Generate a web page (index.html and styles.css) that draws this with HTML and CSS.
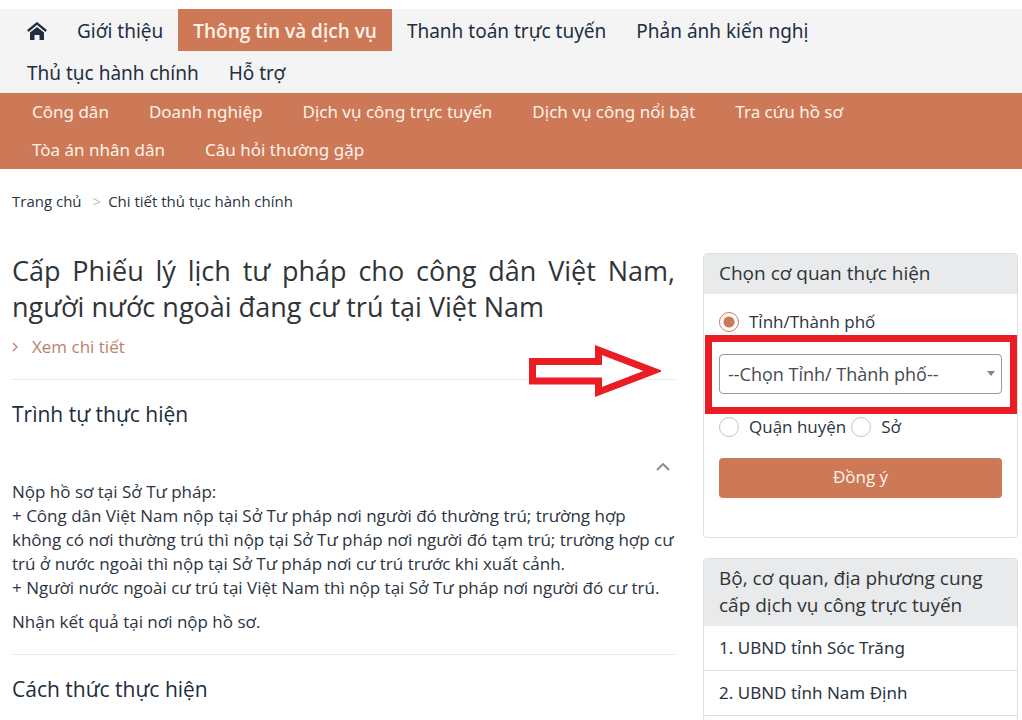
FILE: index.html
```
<!DOCTYPE html>
<html lang="vi">
<head>
<meta charset="utf-8">
<meta name="viewport" content="width=device-width, initial-scale=1">
<title>Chi tiết thủ tục hành chính</title>
<link rel="stylesheet" href="styles.css">
</head>
<body>
<header>
  <nav class="main-nav" aria-label="Menu chính">
    <a class="main-link" href="#" aria-label="Trang chủ">
      <svg class="home-icon" viewBox="0 0 20 18" aria-hidden="true">
        <path d="M.8 9 10 1.400l9.200 7.600" fill="none" stroke="currentColor" stroke-width="2.300"/>
        <path d="M3 10.500 10 4.900l7 5.600V18h-4.500v-5h-5v5H3z" fill="currentColor"/>
      </svg>
    </a>
    <a class="main-link" href="#">Giới thiệu</a>
    <a class="main-link active" href="#">Thông tin và dịch vụ</a>
    <a class="main-link" href="#">Thanh toán trực tuyến</a>
    <a class="main-link" href="#">Phản ánh kiến nghị</a>
    <a class="main-link" href="#">Thủ tục hành chính</a>
    <a class="main-link" href="#">Hỗ trợ</a>
  </nav>
  <nav class="sub-nav" aria-label="Thông tin và dịch vụ">
    <a class="sub-link" href="#">Công dân</a>
    <a class="sub-link" href="#">Doanh nghiệp</a>
    <a class="sub-link" href="#">Dịch vụ công trực tuyến</a>
    <a class="sub-link" href="#">Dịch vụ công nổi bật</a>
    <a class="sub-link" href="#">Tra cứu hồ sơ</a>
    <a class="sub-link" href="#">Tòa án nhân dân</a>
    <a class="sub-link" href="#">Câu hỏi thường gặp</a>
  </nav>
</header>
<nav class="breadcrumb" aria-label="Đường dẫn">
  <a href="#">Trang chủ</a><span class="separator">&gt;</span><a href="#">Chi tiết thủ tục hành chính</a>
</nav>
<div class="page">
  <main>
    <h1>Cấp Phiếu lý lịch tư pháp cho công dân Việt Nam, người nước ngoài đang cư trú tại Việt Nam</h1>
    <div class="detail-row">
      <a class="detail-link" href="#">
        <svg class="detail-icon" viewBox="0 0 6 10" aria-hidden="true"><path d="m1 1 4 4-4 4" fill="none" stroke="currentColor" stroke-width="1.300"/></svg>
        Xem chi tiết
      </a>
      <svg class="arrow" viewBox="0 0 132 54" aria-hidden="true">
        <path d="M3.500 17.500H69.500V6L124 27 69.500 48V37H3.500z" fill="#fff" stroke="#ea1c24" stroke-width="7" stroke-miterlimit="10"/>
      </svg>
    </div>
    <section class="section">
      <h2>Trình tự thực hiện</h2>
      <button class="collapse" type="button" aria-label="Thu gọn">
        <svg viewBox="0 0 14 9" aria-hidden="true"><path d="m1 8 6-6 6 6" fill="none" stroke="currentColor" stroke-width="1.800"/></svg>
      </button>
      <p>Nộp hồ sơ tại Sở Tư pháp:<br>
      + Công dân Việt Nam nộp tại Sở Tư pháp nơi người đó thường trú; trường hợp<br>
      không có nơi thường trú thì nộp tại Sở Tư pháp nơi người đó tạm trú; trường hợp cư<br>
      trú ở nước ngoài thì nộp tại Sở Tư pháp nơi cư trú trước khi xuất cảnh.<br>
      + Người nước ngoài cư trú tại Việt Nam thì nộp tại Sở Tư pháp nơi người đó cư trú.</p>
      <p>Nhận kết quả tại nơi nộp hồ sơ.</p>
    </section>
    <section class="section">
      <h2>Cách thức thực hiện</h2>
    </section>
  </main>
  <aside>
    <form class="card agency">
      <h3>Chọn cơ quan thực hiện</h3>
      <div class="card-body">
        <div class="radio-row">
          <label class="option"><input type="radio" name="level" checked>Tỉnh/Thành phố</label>
        </div>
        <div class="select-wrap">
          <select aria-label="Tỉnh/ Thành phố"><option>--Chọn Tỉnh/ Thành phố--</option></select>
        </div>
        <div class="radio-row">
          <label class="option"><input type="radio" name="level">Quận huyện</label>
          <label class="option"><input type="radio" name="level">Sở</label>
        </div>
        <button class="submit" type="button">Đồng ý</button>
      </div>
    </form>
    <section class="card">
      <h3>Bộ, cơ quan, địa phương cung cấp dịch vụ công trực tuyến</h3>
      <ul class="agencies">
        <li><a href="#">1. UBND tỉnh Sóc Trăng</a></li>
        <li><a href="#">2. UBND tỉnh Nam Định</a></li>
      </ul>
    </section>
  </aside>
</div>
</body>
</html>
```
FILE: styles.css
```
* {
  box-sizing: border-box;
}

body {
  margin: 0;
  padding-top: 9px;
  background: #fff;
  color: #2b3441;
  font: 17px/24px "Open Sans", "Noto Sans", sans-serif;
}

a {
  color: inherit;
  text-decoration: none;
}

h1, h2, h3, p, ul {
  margin: 0;
  padding: 0;
  font-weight: 400;
}

.main-nav,
.sub-nav {
  display: flex;
  flex-wrap: wrap;
  padding: 0 12px;
  font-family: "Noto Sans", "Open Sans", sans-serif;
}

.main-nav {
  background: #f4f4f4;
  color: #1e2f41;
}

.main-link {
  display: flex;
  align-items: center;
  height: 42px;
  padding: 2px 15px 0;
  font-size: 19px;
}

.main-link.active {
  background: #cd7958;
  color: #fff3e8;
  font-family: "Open Sans", "Noto Sans", sans-serif;
  font-weight: 600;
}

.home-icon {
  width: 20px;
  height: 18px;
}

.sub-nav {
  background: #cd7958;
  color: #fff3e8;
}

.sub-link {
  padding: 0 20px;
  line-height: 38px;
}

.breadcrumb {
  padding: 20px 12px 0;
  font-size: 15px;
}

.separator {
  margin: 0 7px 0 11px;
  color: #b9bdc1;
}

.page {
  display: grid;
  grid-template-columns: minmax(0, 1fr) 315px;
  gap: 28px;
  align-items: start;
  padding: 40px 4px 0 12px;
}

h1 {
  color: #303437;
  font-size: 27px;
  line-height: 36px;
  text-align: justify;
}

.detail-row {
  position: relative;
  padding: 9px 0 20px;
}

.detail-link {
  display: inline-flex;
  align-items: center;
  gap: 14px;
  color: #bd8069;
}

.detail-icon {
  width: 6px;
  height: 10px;
}

.arrow {
  position: absolute;
  top: 19px;
  right: 14px;
  width: 132px;
  height: 54px;
}

.section {
  padding: 19px 0 20px;
  border-top: 1px solid #e6e8e9;
}

.section:last-child {
  padding-bottom: 0;
}

h2 {
  color: #202c3b;
  font-size: 21px;
  line-height: 30px;
}

.collapse {
  display: flex;
  align-items: center;
  margin: 25px 5px 0 auto;
  padding: 0;
  width: 14px;
  height: 24px;
  border: 0;
  background: none;
  color: #828a91;
}

.section p {
  margin-top: 10px;
}

.section .collapse + p {
  margin-top: 2px;
}

.card {
  margin-bottom: 20px;
  border: 1px solid #dcdfe1;
  border-radius: 4px;
  overflow: hidden;
}

.card:last-child {
  margin-bottom: 0;
}

.agency {
  overflow: visible;
}

h3 {
  padding: 6px 15px 7px;
  background: #e8eaec;
  color: #303437;
  font-size: 19px;
  line-height: 27px;
}

.card-body {
  padding: 16px 15px 39px;
}

.radio-row {
  display: flex;
  gap: 5px;
}

.option {
  display: flex;
  align-items: center;
  gap: 10px;
}

.option input {
  appearance: none;
  width: 20px;
  height: 20px;
  margin: 0;
  border: 1px solid #bfc4c8;
  border-radius: 50%;
  background: #fff;
}

.option input:checked {
  border-color: #cd7958;
  background: radial-gradient(circle, #cd7958 5px, #fff 6px);
}

.select-wrap {
  position: relative;
  margin: 20px 0 21px;
}

/* highlight frame around the province picker */
.select-wrap::before {
  content: "";
  position: absolute;
  inset: -19px -15px -20px -14px;
  border: 7px solid #ea1c24;
  pointer-events: none;
}

.select-wrap::after {
  content: "";
  position: absolute;
  top: 17px;
  right: 7px;
  border: 4px solid transparent;
  border-top: 5px solid #848484;
  pointer-events: none;
}

select {
  display: block;
  appearance: none;
  width: 100%;
  height: 40px;
  padding: 0 8px;
  border: 1px solid #999;
  border-radius: 4px;
  background: #fff;
  color: #454b50;
  font: inherit;
  font-size: 18px;
}

.submit {
  width: 100%;
  height: 40px;
  margin-top: 19px;
  padding: 0 0 2px;
  border: 0;
  border-radius: 4px;
  background: #cd7958;
  color: #fff3e8;
  font: inherit;
}

.agencies {
  padding-bottom: 5px;
  font-family: "Noto Sans", "Open Sans", sans-serif;
  list-style: none;
}

.agencies li {
  padding: 10px 15px;
  border-bottom: 1px solid #dcdfe1;
}
```
